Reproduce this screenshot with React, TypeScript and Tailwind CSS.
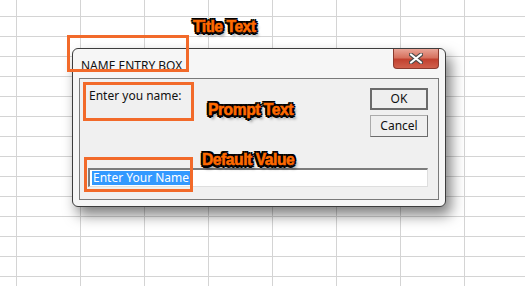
const uiFont = { fontFamily: '"Noto Sans", "Open Sans", sans-serif' };

const labelShadow =
  "[text-shadow:-2px_-2px_0_#000,2px_-2px_0_#000,-2px_2px_0_#000,2px_2px_0_#000,0_-2.5px_0_#000,0_2.5px_0_#000,-2.5px_0_0_#000,2.5px_0_0_#000,3px_4px_3px_rgba(0,0,0,0.45)]";

function Callout({ text, className }: { text: string; className: string }) {
  return (
    <div
      className={`absolute origin-left scale-x-[0.92] text-[17px] font-bold leading-none tracking-[-0.5px] text-[#ff6a00] ${labelShadow} ${className}`}
      style={{ fontFamily: '"Liberation Sans", Arial, sans-serif', WebkitTextStroke: "0.6px #ff6a00" }}
    >
      {text}
    </div>
  );
}

function CloseButton() {
  return (
    <div className="absolute right-[6px] top-0 flex h-[20px] w-[46px] items-center justify-center rounded-b-[4px] border border-t-0 border-[#8a3a2e] bg-[linear-gradient(to_bottom,#e9a496_0%,#d7725f_45%,#c2412f_55%,#d0604c_100%)]">
      <svg width="14" height="11" viewBox="0 0 14 11">
        <path
          d="M2 1.5 L12 9.5 M12 1.5 L2 9.5"
          stroke="#4a4a4a"
          strokeWidth="4.2"
          strokeLinecap="round"
        />
        <path
          d="M2 1.5 L12 9.5 M12 1.5 L2 9.5"
          stroke="#fff"
          strokeWidth="2.2"
          strokeLinecap="round"
        />
      </svg>
    </div>
  );
}

function InputBoxDialog() {
  return (
    <div
      className="absolute left-[72px] top-[48px] flex h-[159px] w-[374px] flex-col rounded-[6px] border border-[#3d3d3d] bg-[#f6f6f6] shadow-[5px_8px_14px_rgba(0,0,0,0.5)]"
      style={uiFont}
    >
      <div className="relative flex h-[29px] items-center pl-[8px] pt-[4px] text-[12px] text-[#111]">
        NAME ENTRY BOX
        <CloseButton />
      </div>
      <div className="mx-[6px] mb-[6px] flex flex-1 flex-col border border-[#7a7a7a] bg-[#f0f0f0] px-[8px] pt-[9px]">
        <div className="flex justify-between">
          <div className="pl-[1px] text-[12px] leading-[16px] text-[#111]">
            Enter you name:
          </div>
          <div className="mr-[2px] flex flex-col gap-[5px]">
            <button className="h-[22px] w-[58px] border-2 border-[#6b6b6b] bg-[#efefef] text-[12px] text-[#111]">
              OK
            </button>
            <button className="h-[22px] w-[58px] border border-[#ababab] border-b-[#6b6b6b] border-r-[#6b6b6b] bg-[#efefef] text-[12px] text-[#111]">
              Cancel
            </button>
          </div>
        </div>
        <div className="mr-[2px] mt-[31px] flex h-[19px] items-center border-l-2 border-t-2 border-[#7c7c7c] border-b border-r border-b-[#dedede] border-r-[#dedede] bg-white pl-[2px]">
          <span className="bg-[#3399ff] px-[1px] text-[12px] leading-[14px] text-white">
            Enter Your Name
          </span>
        </div>
      </div>
    </div>
  );
}

export default function App() {
  return (
    <div className="relative h-[286px] w-[525px] overflow-hidden bg-white bg-[linear-gradient(to_right,#d4d4d4_1px,transparent_1px),linear-gradient(to_bottom,#d4d4d4_1px,transparent_1px)] bg-[size:64px_20px] bg-[position:16px_16px]">
      <InputBoxDialog />

      <div className="absolute left-[67px] top-[35px] h-[37px] w-[122px] border-[3px] border-[#f26a2a]" />
      <div className="absolute left-[83px] top-[82px] h-[39px] w-[111px] border-[3px] border-[#f26a2a]" />
      <div className="absolute left-[84px] top-[157px] h-[35px] w-[109px] border-[3px] border-[#f26a2a]" />

      <Callout text="Title Text" className="left-[193px] top-[18px]" />
      <Callout text="Prompt Text" className="left-[208px] top-[101px]" />
      <Callout text="Default Value" className="left-[202px] top-[151px]" />
    </div>
  );
}
